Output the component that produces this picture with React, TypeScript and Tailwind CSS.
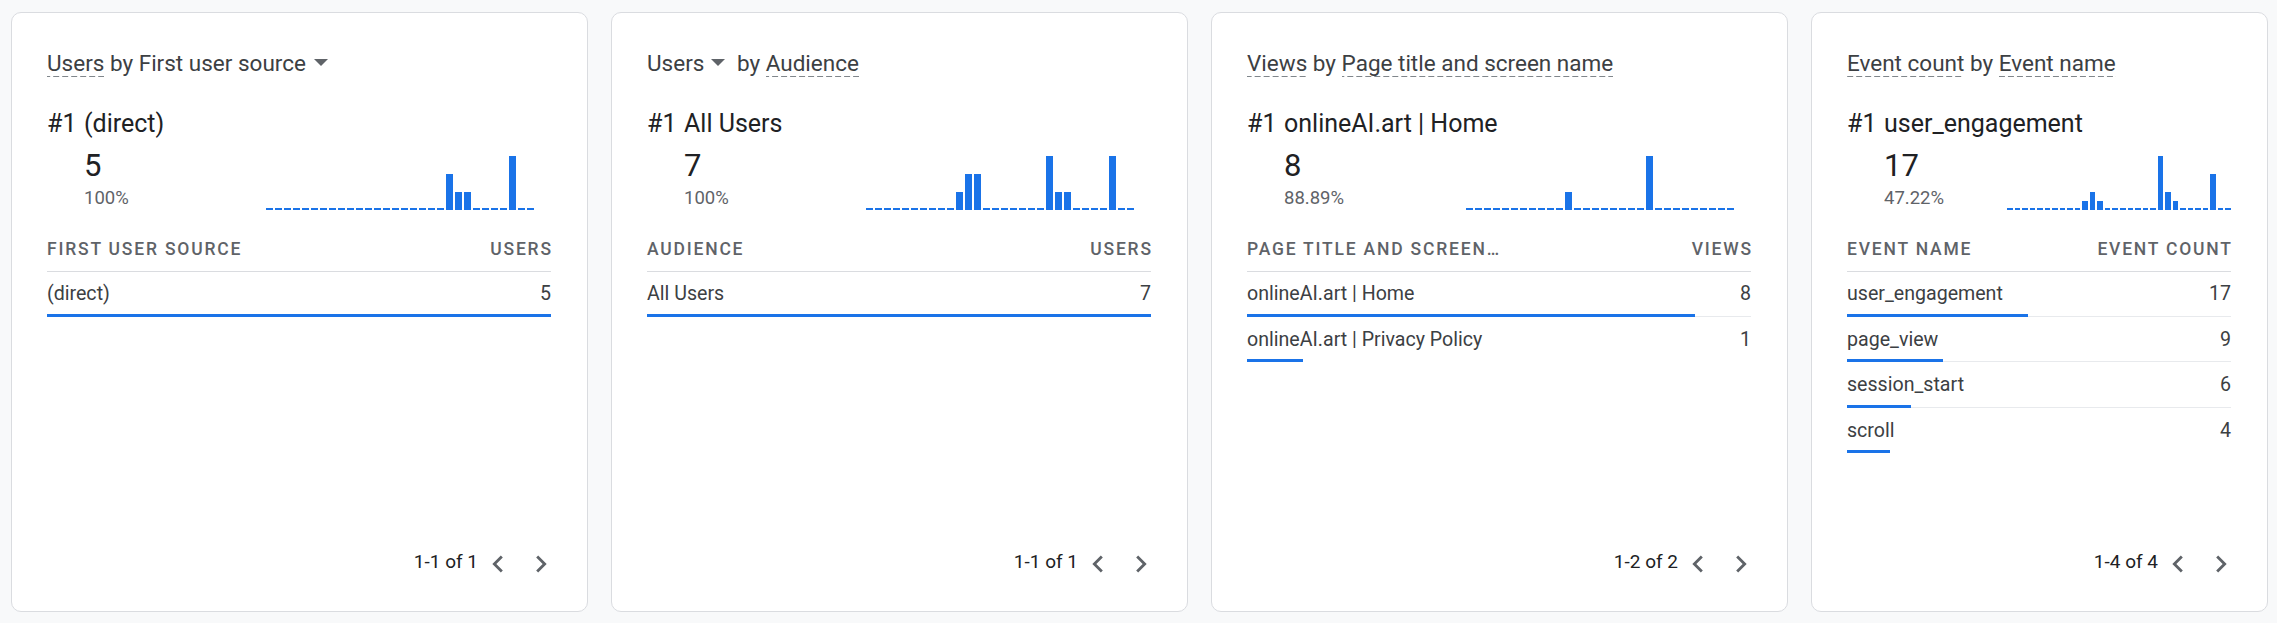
import React from 'react';

const U = ({ children }: { children: React.ReactNode }) => (
  <span className="inline-block leading-[28px] bg-[linear-gradient(to_right,#80868b_6px,transparent_6px)] bg-[length:9px_1px] bg-repeat-x bg-bottom">
    {children}
  </span>
);

const Arrow = ({ cls }: { cls: string }) => (
  <svg width="14" height="7" viewBox="7 10 10 5" className={'inline-block align-top mt-[10px] ' + cls}>
    <path d="M7 10l5 5 5-5z" fill="#5f6368" />
  </svg>
);

type Row = { label: string; value: number };
type CardData = {
  wCls: string;
  chartCls: string;
  title: React.ReactNode;
  rank: string;
  num: string;
  pct: string;
  bars: number[];
  max: number;
  hl: string;
  hr: string;
  rows: Row[];
  page: string;
};

const slots = (m: Record<number, number>) => Array.from({ length: 30 }, (_, i) => m[i] ?? 0);

const cards: CardData[] = [
  {
    wCls: 'w-[577px]',
    chartCls: 'w-[268px] mr-[17px]',
    title: (
      <>
        <U>Users</U> by First user source
        <Arrow cls="ml-[8px]" />
      </>
    ),
    rank: '(direct)',
    num: '5',
    pct: '100%',
    bars: slots({ 20: 2, 21: 1, 22: 1, 27: 3 }),
    max: 3,
    hl: 'First user source',
    hr: 'Users',
    rows: [{ label: '(direct)', value: 5 }],
    page: '1-1 of 1',
  },
  {
    wCls: 'w-[577px]',
    chartCls: 'w-[268px] mr-[17px]',
    title: (
      <>
        Users
        <Arrow cls="ml-[7px] mr-[6px]" /> by <U>Audience</U>
      </>
    ),
    rank: 'All Users',
    num: '7',
    pct: '100%',
    bars: slots({ 10: 1, 11: 2, 12: 2, 20: 3, 21: 1, 22: 1, 27: 3 }),
    max: 3,
    hl: 'Audience',
    hr: 'Users',
    rows: [{ label: 'All Users', value: 7 }],
    page: '1-1 of 1',
  },
  {
    wCls: 'w-[577px]',
    chartCls: 'w-[268px] mr-[17px]',
    title: (
      <>
        <U>Views</U> by <U>Page title and screen name</U>
      </>
    ),
    rank: 'onlineAI.art | Home',
    num: '8',
    pct: '88.89%',
    bars: slots({ 11: 1, 20: 3 }),
    max: 3,
    hl: 'Page title and screen…',
    hr: 'Views',
    rows: [
      { label: 'onlineAI.art | Home', value: 8 },
      { label: 'onlineAI.art | Privacy Policy', value: 1 },
    ],
    page: '1-2 of 2',
  },
  {
    wCls: 'w-[457px]',
    chartCls: 'w-[224px] mr-0',
    title: (
      <>
        <U>Event count</U> by <U>Event name</U>
      </>
    ),
    rank: 'user_engagement',
    num: '17',
    pct: '47.22%',
    bars: slots({ 10: 1, 11: 2, 12: 1, 20: 6, 21: 2, 22: 1, 27: 4 }),
    max: 6,
    hl: 'Event name',
    hr: 'Event count',
    rows: [
      { label: 'user_engagement', value: 17 },
      { label: 'page_view', value: 9 },
      { label: 'session_start', value: 6 },
      { label: 'scroll', value: 4 },
    ],
    page: '1-4 of 4',
  },
];

function Card({ c }: { c: CardData }) {
  const total = c.rows.reduce((s, r) => s + r.value, 0);
  return (
    <div
      className={
        c.wCls +
        ' h-[600px] shrink-0 bg-white border border-[#dadce0] rounded-[10px] pl-[35px] pr-[36px] pt-[36px] pb-[30px] flex flex-col'
      }
    >
      <div className="text-[22.5px] leading-[28px] h-[28px] text-[#3c4043] whitespace-nowrap">{c.title}</div>
      <div className="mt-[30.5px] flex items-baseline text-[25px] leading-[32px] text-[#202124] whitespace-nowrap">
        <span className="w-[37px] shrink-0">#1</span>
        <span>{c.rank}</span>
      </div>
      <div className="mt-[8px] flex items-end">
        <div className="flex-1 pl-[37px]">
          <div className="text-[31px] leading-[36px] text-[#202124]">{c.num}</div>
          <div className="mt-[2px] text-[18.5px] leading-[24px] text-[#5f6368]">{c.pct}</div>
        </div>
        <div className={'flex items-end gap-[2px] h-[54px] ' + c.chartCls}>
          {c.bars.map((v, i) => (
            <div
              key={i}
              className="flex-1 bg-[#1a73e8]"
              style={{ height: v === 0 ? 2 : (v / c.max) * 54 }}
            />
          ))}
        </div>
      </div>
      <div className="mt-[29.5px] flex justify-between border-b border-[#dadce0] pb-[12px] text-[17.5px] leading-[20px] font-medium tracking-[1.8px] text-[#5f6368] uppercase whitespace-nowrap">
        <span>{c.hl}</span>
        <span className="-mr-[1.8px]">{c.hr}</span>
      </div>
      <div className="flex-1">
        {c.rows.map((r, i) => (
          <div key={i} className="pt-[10px] pb-[1px]">
            <div className="flex justify-between text-[19.6px] leading-[24px] text-[#3c4043] whitespace-nowrap">
              <span>{r.label}</span>
              <span>{r.value}</span>
            </div>
            <div className="relative mt-[7.5px] h-[3px]">
              {i < c.rows.length - 1 && (
                <div className="absolute left-0 right-0 bottom-0 h-px bg-[#e8eaed]" />
              )}
              <div
                className="absolute left-0 top-0 h-[3px] bg-[#1a73e8]"
                style={{ width: `${(r.value / total) * 100}%` }}
              />
            </div>
          </div>
        ))}
      </div>
      <div className="flex items-center justify-end h-[34px] -mr-[7px]">
        <span className="text-[19px] leading-[24px] text-[#202124] pb-[4px] whitespace-nowrap">{c.page}</span>
        <div className="ml-[3px] w-[34px] h-[34px] flex items-center justify-center">
          <svg width="34" height="34" viewBox="0 0 24 24">
            <path d="M15.41 7.41L14 6l-6 6 6 6 1.41-1.41L10.83 12z" fill="#5f6368" />
          </svg>
        </div>
        <div className="ml-[9px] w-[34px] h-[34px] flex items-center justify-center">
          <svg width="34" height="34" viewBox="0 0 24 24">
            <path d="M10 6L8.59 7.41 13.17 12l-4.58 4.59L10 18l6-6z" fill="#5f6368" />
          </svg>
        </div>
      </div>
    </div>
  );
}

export default function App() {
  return (
    <div className="w-[2277px] h-[623px] bg-[#f8f9fa] flex gap-[23px] pl-[11px] pt-[12px] font-['Roboto','Liberation_Sans',sans-serif] overflow-hidden">
      {cards.map((c, i) => (
        <Card key={i} c={c} />
      ))}
    </div>
  );
}
